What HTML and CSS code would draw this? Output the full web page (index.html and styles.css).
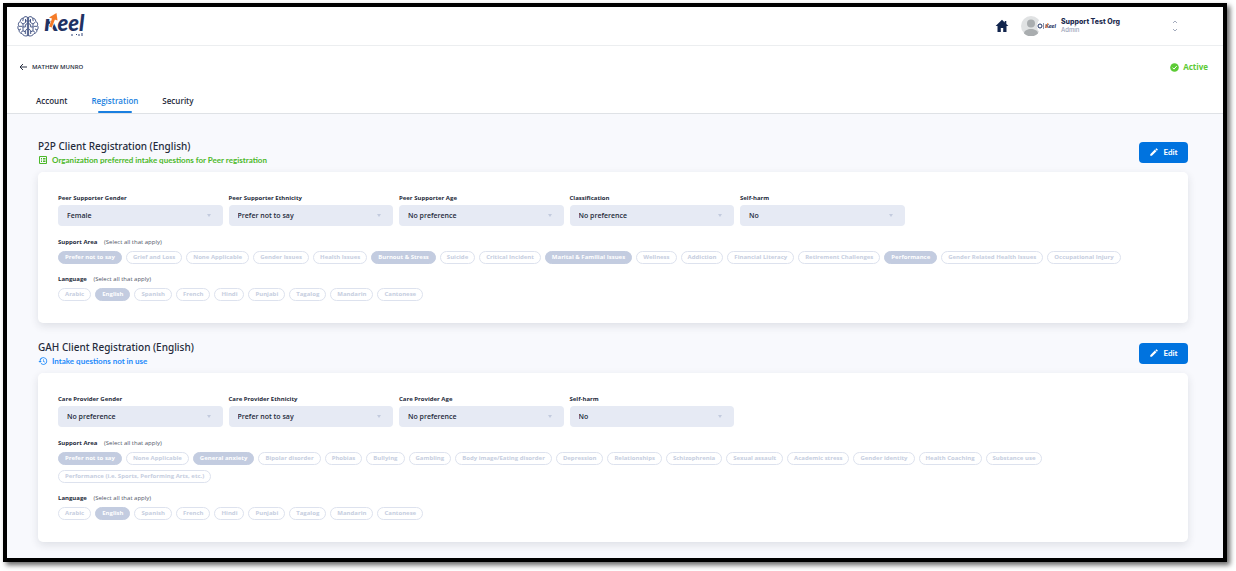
FILE: index.html
```html
<!DOCTYPE html>
<html lang="en">
<head>
    <meta charset="UTF-8">
    <meta name="viewport" content="width=device-width, initial-scale=1">
    <title>Keel - Registration</title>
    <link rel="stylesheet" href="styles.css">
</head>
<body>
<!-- shared icons -->
<svg class="sprite" aria-hidden="true">
    <symbol id="brain" viewBox="0 0 22 22">
        <g fill="none" stroke="#35477a" stroke-width=".9">
            <path d="M10.400 1.500v19M11.600 1.500v19"/>
            <path d="M10.400 1.600C8.600.600 6.900 1.300 6.300 2.600 4.500 2.700 3.200 4.100 3.300 5.800 1.600 6.700 1 8.400 1.500 10 .500 11.500.700 13.500 2 14.600 2 16.500 3.300 17.900 5 18 5.900 19.900 8.300 21 10.400 20.300"/>
            <path d="M11.600 1.600C13.400.600 15.100 1.300 15.700 2.600 17.500 2.700 18.800 4.100 18.700 5.800 20.400 6.700 21 8.400 20.500 10 21.500 11.500 21.300 13.500 20 14.600 20 16.500 18.700 17.900 17 18 16.100 19.900 13.700 21 11.600 20.300"/>
            <path d="M8.500 3.500v3.500L6 8.500M3.500 6.500l2.500 2v3M1.800 10.800h3l1.200 1.500v3l-2 1.500M8.300 18.500v-3.500l2-1.500M8.300 11.500V9.300l2-1.300M6.300 2.600l-.500 3M2 14.600l2-1.200M6 15.300l2.300 1M6 11.500h2.300M8.500 5l1.900.800"/>
            <path d="M13.500 3.500v3.500L16 8.500M18.500 6.500l-2.500 2v3M20.200 10.800h-3L16 12.300v3l2 1.500M13.700 18.500v-3.500l-2-1.500M13.700 11.500V9.300l-2-1.300M15.700 2.600l.500 3M20 14.600l-2-1.200M16 15.300l-2.300 1M16 11.500h-2.300M13.500 5l-1.900.800"/>
        </g>
    </symbol>
    <symbol id="pencil" viewBox="0 0 24 24">
        <path fill="currentColor" d="M3 17.250V21h3.750L17.800 9.900l-3.700-3.700L3 17.250zM20.700 7a1 1 0 0 0 0-1.400l-2.300-2.300a1 1 0 0 0-1.400 0l-1.800 1.800 3.700 3.700L20.700 7z"/>
    </symbol>
</svg>

<div class="page">
    <!-- top bar -->
    <header class="topbar">
        <a class="logo" href="#" aria-label="Keel">
            <svg width="22" height="23"><use href="#brain"/></svg>
            <svg class="wordmark" width="46" height="26" viewBox="0 0 46 26">
                <text class="wordmark-text" x="0" y="18">Keel</text>
                <path d="M0 0h18L12.500 8 8 10V6H0z" fill="#fff"/>
                <path d="M6.500 14.500L10 4.500" stroke="#fff" stroke-width="4"/>
                <path d="M6.500 14L10 4.500" stroke="#f47b29" stroke-width="3"/>
                <path d="M5 4.500L12.500 0L13.500 7.500z" fill="#f47b29"/>
                <path d="M27 22h2M32 21.500h1M34 22h2M38 20v3" stroke="#35477a"/>
            </svg>
        </a>
        <div class="account">
            <a class="home" href="#" aria-label="Home">
                <svg width="14" height="14" viewBox="0 0 14 14"><path fill="#12254d" d="M7 .800L.600 7h1.900v6h3.300V9h2.400v4h3.300V7h1.900L11.300 4.900V2H9.700v1.400z"/></svg>
            </a>
            <svg class="avatar" width="36" height="20" viewBox="0 0 36 20" aria-hidden="true">
                <circle cx="10" cy="10" r="10" fill="#e0e2e3"/>
                <circle cx="10" cy="7.500" r="4" fill="#a9adaf"/>
                <path d="M3 17.500c0-6 14-6 14 0a10 10 0 0 1-14 0z" fill="#a9adaf"/>
                <circle cx="26" cy="10" r="10" fill="#fff"/>
                <circle cx="19" cy="10" r="2" fill="none" stroke="#1f3264"/>
                <path d="M22.500 7v6" stroke="#8a93ad"/>
                <text class="avatar-text" x="24" y="12">Keel</text>
                <path d="M25 12l2-5" stroke="#f47b29"/>
            </svg>
            <div class="user">
                <strong>Support Test Org</strong>
                <span>Admin</span>
            </div>
            <button class="switcher" aria-label="Switch account">
                <svg width="6" height="12" viewBox="0 0 6 12" fill="none" stroke="#a3abbd"><path d="M1 3l2-2 2 2M1 9l2 2 2-2"/></svg>
            </button>
        </div>
    </header>

    <!-- client name and tabs -->
    <div class="subhead">
        <div class="person">
            <a class="back" href="#">
                <svg width="8" height="8" viewBox="0 0 8 8" fill="none" stroke="#2a3142"><path d="M8 4H1M4 1L1 4l3 3"/></svg>
                MATHEW MUNRO
            </a>
            <span class="status">
                <svg width="9" height="9" viewBox="0 0 9 9"><circle cx="4.500" cy="4.500" r="4.300" fill="#5ccb35"/><path d="M2.500 4.600l1.500 1.500 2.700-3" fill="none" stroke="#fff"/></svg>
                Active
            </span>
        </div>
        <nav class="tabs">
            <a href="#">Account</a>
            <a class="current" href="#">Registration</a>
            <a href="#">Security</a>
        </nav>
    </div>

    <main class="content">
        <section class="block">
            <div class="block-head">
                <div>
                    <h2>P2P Client Registration (English)</h2>
                    <p class="note preferred">
                        <svg width="10" height="10" viewBox="0 0 10 10" fill="none" stroke="currentColor"><path d="M1.500 1.500h7v7h-7zM3 3.500h1M5 3.500h2.500M3 5h1M5 5h2.500M3 6.500h1M5 6.500h2.500"/></svg>
                        Organization preferred intake questions for Peer registration
                    </p>
                </div>
                <button class="edit"><svg width="10" height="10"><use href="#pencil"/></svg>Edit</button>
            </div>
            <div class="card">
                <div class="fields">
                    <div class="field"><label for="peer-gender">Peer Supporter Gender</label><div class="select"><select id="peer-gender" disabled><option>Female</option></select></div></div>
                    <div class="field"><label for="peer-ethnicity">Peer Supporter Ethnicity</label><div class="select"><select id="peer-ethnicity" disabled><option>Prefer not to say</option></select></div></div>
                    <div class="field"><label for="peer-age">Peer Supporter Age</label><div class="select"><select id="peer-age" disabled><option>No preference</option></select></div></div>
                    <div class="field"><label for="classification">Classification</label><div class="select"><select id="classification" disabled><option>No preference</option></select></div></div>
                    <div class="field"><label for="peer-harm">Self-harm</label><div class="select"><select id="peer-harm" disabled><option>No</option></select></div></div>
                </div>
                <h3>Support Area <small>(Select all that apply)</small></h3>
                <div class="chips">
                    <button class="chip on" aria-pressed="true" disabled>Prefer not to say</button>
                    <button class="chip" disabled>Grief and Loss</button>
                    <button class="chip" disabled>None Applicable</button>
                    <button class="chip" disabled>Gender Issues</button>
                    <button class="chip" disabled>Health Issues</button>
                    <button class="chip on" aria-pressed="true" disabled>Burnout &amp; Stress</button>
                    <button class="chip" disabled>Suicide</button>
                    <button class="chip" disabled>Critical Incident</button>
                    <button class="chip on" aria-pressed="true" disabled>Marital &amp; Familial Issues</button>
                    <button class="chip" disabled>Wellness</button>
                    <button class="chip" disabled>Addiction</button>
                    <button class="chip" disabled>Financial Literacy</button>
                    <button class="chip" disabled>Retirement Challenges</button>
                    <button class="chip on" aria-pressed="true" disabled>Performance</button>
                    <button class="chip" disabled>Gender Related Health Issues</button>
                    <button class="chip" disabled>Occupational Injury</button>
                </div>
                <h3>Language <small>(Select all that apply)</small></h3>
                <div class="chips">
                    <button class="chip" disabled>Arabic</button>
                    <button class="chip on" aria-pressed="true" disabled>English</button>
                    <button class="chip" disabled>Spanish</button>
                    <button class="chip" disabled>French</button>
                    <button class="chip" disabled>Hindi</button>
                    <button class="chip" disabled>Punjabi</button>
                    <button class="chip" disabled>Tagalog</button>
                    <button class="chip" disabled>Mandarin</button>
                    <button class="chip" disabled>Cantonese</button>
                </div>
            </div>
        </section>

        <section class="block">
            <div class="block-head">
                <div>
                    <h2>GAH Client Registration (English)</h2>
                    <p class="note unused">
                        <svg width="10" height="10" viewBox="0 0 24 24"><path fill="currentColor" d="M13 3a9 9 0 0 0-9 9H1l3.900 3.900L9 12H6a7 7 0 1 1 2.060 4.940l-1.420 1.420A9 9 0 1 0 13 3zm-1 5v5l4.300 2.500.700-1.200-3.500-2.100V8z"/></svg>
                        Intake questions not in use
                    </p>
                </div>
                <button class="edit"><svg width="10" height="10"><use href="#pencil"/></svg>Edit</button>
            </div>
            <div class="card">
                <div class="fields">
                    <div class="field"><label for="care-gender">Care Provider Gender</label><div class="select"><select id="care-gender" disabled><option>No preference</option></select></div></div>
                    <div class="field"><label for="care-ethnicity">Care Provider Ethnicity</label><div class="select"><select id="care-ethnicity" disabled><option>Prefer not to say</option></select></div></div>
                    <div class="field"><label for="care-age">Care Provider Age</label><div class="select"><select id="care-age" disabled><option>No preference</option></select></div></div>
                    <div class="field"><label for="care-harm">Self-harm</label><div class="select"><select id="care-harm" disabled><option>No</option></select></div></div>
                </div>
                <h3>Support Area <small>(Select all that apply)</small></h3>
                <div class="chips">
                    <button class="chip on" aria-pressed="true" disabled>Prefer not to say</button>
                    <button class="chip" disabled>None Applicable</button>
                    <button class="chip on" aria-pressed="true" disabled>General anxiety</button>
                    <button class="chip" disabled>Bipolar disorder</button>
                    <button class="chip" disabled>Phobias</button>
                    <button class="chip" disabled>Bullying</button>
                    <button class="chip" disabled>Gambling</button>
                    <button class="chip" disabled>Body image/Eating disorder</button>
                    <button class="chip" disabled>Depression</button>
                    <button class="chip" disabled>Relationships</button>
                    <button class="chip" disabled>Schizophrenia</button>
                    <button class="chip" disabled>Sexual assault</button>
                    <button class="chip" disabled>Academic stress</button>
                    <button class="chip" disabled>Gender identity</button>
                    <button class="chip" disabled>Health Coaching</button>
                    <button class="chip" disabled>Substance use</button>
                    <button class="chip" disabled>Performance (i.e. Sports, Performing Arts, etc.)</button>
                </div>
                <h3>Language <small>(Select all that apply)</small></h3>
                <div class="chips">
                    <button class="chip" disabled>Arabic</button>
                    <button class="chip on" aria-pressed="true" disabled>English</button>
                    <button class="chip" disabled>Spanish</button>
                    <button class="chip" disabled>French</button>
                    <button class="chip" disabled>Hindi</button>
                    <button class="chip" disabled>Punjabi</button>
                    <button class="chip" disabled>Tagalog</button>
                    <button class="chip" disabled>Mandarin</button>
                    <button class="chip" disabled>Cantonese</button>
                </div>
            </div>
        </section>
    </main>
</div>
</body>
</html>
```
FILE: styles.css
```css
*{
    margin: 0;
    padding: 0;
    box-sizing: border-box;
}
body{
    background: #fff;
    color: #252b3b;
    font-family: "Open Sans", "Noto Sans", sans-serif;
    font-size: 8px;
    line-height: 10px;
    padding: 3px 9px 9px 3px;
}
a{
    color: inherit;
    text-decoration: none;
}
button, select{
    font-family: inherit;
    border: none;
}
svg{
    display: block;
    flex: none;
}
.sprite{
    position: absolute;
    width: 0;
    height: 0;
}
.page{
    min-height: calc(100vh - 12px);
    border: 4px solid #000;
    background: #f8f9fd;
    box-shadow: 3px 3px 5px rgba(0, 0, 0, 0.6);
}

/* top bar */
.topbar{
    display: flex;
    justify-content: space-between;
    align-items: center;
    height: 39px;
    padding: 0 44px 0 10px;
    background: #fff;
    border-bottom: 1px solid #eceef0;
}
.logo{
    display: flex;
    align-items: center;
    gap: 5px;
}
.wordmark{
    overflow: visible;
}
.wordmark-text{
    font: italic 900 22px Lato, sans-serif;
    fill: #1f3264;
}
.account{
    display: flex;
    align-items: center;
}
.avatar{
    margin: 0 4px 0 12px;
}
.avatar-text{
    font: italic 900 6px Lato, sans-serif;
    fill: #1f3264;
}
.user{
    width: 110px;
    font-family: Inter, sans-serif;
    line-height: 8px;
}
.user strong{
    display: block;
    font-size: 7px;
    font-weight: 800;
    color: #1b2a4e;
}
.user span{
    display: block;
    font-size: 6px;
    font-weight: 500;
    color: #9aa3b8;
}
.switcher{
    background: none;
    padding: 1px;
}

/* client name and tabs */
.subhead{
    background: #fff;
    border-bottom: 1px solid #dfe2e6;
}
.person{
    display: flex;
    justify-content: space-between;
    align-items: center;
    padding: 16px 15px 16px 12px;
}
.back{
    display: flex;
    align-items: center;
    gap: 5px;
    font-size: 6px;
    font-weight: 600;
}
.status{
    display: flex;
    align-items: center;
    gap: 4px;
    color: #5ccb35;
    font-weight: bold;
}
.tabs{
    display: flex;
    gap: 24px;
    padding-left: 29px;
}
.tabs a{
    display: flex;
    flex-direction: column;
    align-items: center;
    gap: 5px;
    height: 25px;
    padding-top: 8px;
    font-weight: 600;
}
.tabs .current{
    color: #1a7fe0;
}
.tabs .current::after{
    content: "";
    width: 34px;
    height: 2px;
    border-radius: 1px;
    background: #1a7fe0;
}

/* registration blocks */
.content{
    display: flex;
    flex-direction: column;
    gap: 17px;
    padding: 25px 35px 15px 31px;
}
.block-head{
    display: flex;
    justify-content: space-between;
    align-items: center;
    margin-bottom: 7px;
}
h2{
    font-family: "Noto Sans", sans-serif;
    font-size: 10px;
    font-weight: 500;
    line-height: 14px;
    margin-bottom: 2px;
}
.note{
    display: flex;
    align-items: center;
    gap: 4px;
    font-family: Lato, sans-serif;
    font-weight: bold;
}
.preferred{
    color: #4cb82a;
}
.unused{
    color: #1f8bfb;
}
.edit{
    display: flex;
    justify-content: center;
    align-items: center;
    gap: 4px;
    width: 49px;
    height: 21px;
    border-radius: 4px;
    background: #0073df;
    color: #fff;
    font-family: Lato, sans-serif;
    font-size: 8px;
    font-weight: bold;
}
.card{
    padding: 22px 20px;
    border-radius: 5px;
    background: #fff;
    box-shadow: 0 3px 8px rgba(30, 40, 60, 0.12);
}
.fields{
    display: grid;
    grid-template-columns: repeat(6, 1fr);
    gap: 6px;
    padding-right: 93px;
}
.field label{
    display: block;
    margin-bottom: 3px;
    font-size: 6px;
    font-weight: bold;
    line-height: 8px;
}
.select{
    position: relative;
}
.select select{
    display: block;
    width: 100%;
    height: 21px;
    padding: 0 9px;
    border-radius: 4px;
    background: #e6eaf4;
    color: #252b3b;
    font-size: 7px;
    font-weight: 600;
    opacity: 1;
    appearance: none;
}
/* drop-down arrow */
.select::after{
    content: "";
    position: absolute;
    top: 9px;
    right: 12px;
    border: 2px solid transparent;
    border-top: 3px solid #c3cbde;
    border-bottom: none;
}
h3{
    margin: 11px 0 5px;
    font-size: 6px;
    line-height: 8px;
}
.fields + h3{
    margin-top: 12px;
}
h3 small{
    margin-left: 5px;
    font-size: 6px;
    font-weight: normal;
    color: #4f5666;
}
.chips{
    display: flex;
    flex-wrap: wrap;
    gap: 5px 4px;
}
.chip{
    height: 13px;
    padding: 0 6px;
    border: 1px solid #dde2ee;
    border-radius: 7px;
    background: #fff;
    color: #c6cee0;
    font-size: 6px;
    font-weight: bold;
    line-height: 11px;
}
.chip.on{
    border-color: #c3cce0;
    background: #c3cce0;
    color: #fff;
}
```
